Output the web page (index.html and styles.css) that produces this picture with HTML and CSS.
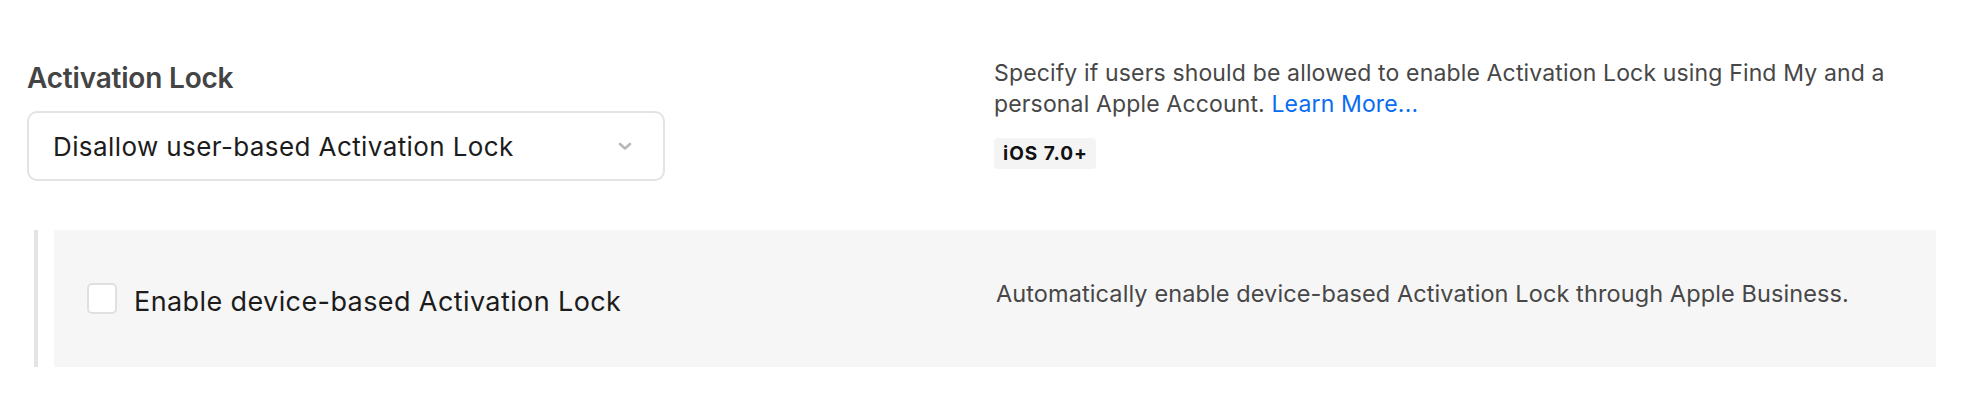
FILE: index.html
```html
<!DOCTYPE html>
<html lang="en">
<head>
<meta charset="utf-8">
<title>Activation Lock</title>
<link rel="stylesheet" href="styles.css">
</head>
<body>
<main class="page">
  <section class="setting">
    <div class="setting-control">
      <h2 class="setting-title">Activation Lock</h2>
      <div class="select">
        <span class="select-value">Disallow user-based Activation Lock</span>
        <svg class="select-chevron" width="14" height="9" viewBox="0 0 14 9" aria-hidden="true">
          <path d="M2 2 L7 6.5 L12 2" fill="none" stroke="#b8b8b8" stroke-width="2.6" stroke-linecap="round" stroke-linejoin="round"/>
        </svg>
      </div>
    </div>
    <div class="setting-info">
      <p class="setting-desc">Specify if users should be allowed to enable Activation Lock using Find My and a personal Apple Account. <a class="link" href="#">Learn More...</a></p>
      <span class="badge">iOS 7.0+</span>
    </div>
  </section>

  <div class="subsection">
    <div class="subpanel">
      <label class="check-row">
        <span class="checkbox"></span>
        <span class="check-label">Enable device-based Activation Lock</span>
      </label>
      <p class="sub-desc">Automatically enable device-based Activation Lock through Apple Business.</p>
    </div>
  </div>
</main>
</body>
</html>
```

FILE: styles.css
```css
* {
  box-sizing: border-box;
}

html, body {
  margin: 0;
  padding: 0;
  background: #ffffff;
}

body {
  font-family: Inter, "Liberation Sans", sans-serif;
  color: #1c1c1c;
}

.page {
  padding: 58px 26px 0 27px;
}

.setting {
  display: grid;
  grid-template-columns: 941px 1fr;
  column-gap: 26px;
  align-items: start;
}

.setting-title {
  margin: 0;
  font-size: 28px;
  line-height: 41px;
  font-weight: 600;
  color: #444444;
  letter-spacing: -0.2px;
}

.select {
  margin-top: 12px;
  width: 638px;
  height: 70px;
  border: 2px solid #e3e3e3;
  border-radius: 10px;
  display: flex;
  align-items: center;
  justify-content: space-between;
  padding: 0 31px 0 24px;
  background: #fff;
}

.select-value {
  font-size: 26px;
  color: #1c1c1c;
  letter-spacing: 0.4px;
}

.select-chevron {
  display: block;
}

.setting-desc {
  margin: 0;
  font-size: 23px;
  line-height: 31px;
  color: #474747;
  letter-spacing: 0.15px;
}

.link {
  color: #0a6cf0;
  text-decoration: none;
}

.badge {
  display: inline-block;
  margin-top: 18px;
  height: 31px;
  line-height: 31px;
  padding: 0 8px 0 9px;
  background: #f4f4f4;
  border-radius: 4px;
  font-size: 19px;
  font-weight: 700;
  color: #111111;
  letter-spacing: 1px;
}

.subsection {
  margin-top: 49px;
  margin-left: 7px;
  border-left: 4px solid #e4e4e4;
  padding-left: 16px;
}

.subpanel {
  background: #f6f6f6;
  height: 137px;
  display: grid;
  grid-template-columns: 909px 1fr;
  align-items: center;
  padding-left: 33px;
}

.check-row {
  display: flex;
  align-items: center;
  gap: 17px;
}

.checkbox {
  width: 30px;
  height: 31px;
  border: 2px solid #e0e0e0;
  border-radius: 5px;
  background: #ffffff;
  flex: none;
}

.check-label {
  font-size: 27px;
  color: #1c1c1c;
  letter-spacing: 0.4px;
  margin-top: 5px;
}

.sub-desc {
  margin: 0 0 10px 0;
  font-size: 23.5px;
  line-height: 31px;
  color: #474747;
  letter-spacing: 0.1px;
}
```
